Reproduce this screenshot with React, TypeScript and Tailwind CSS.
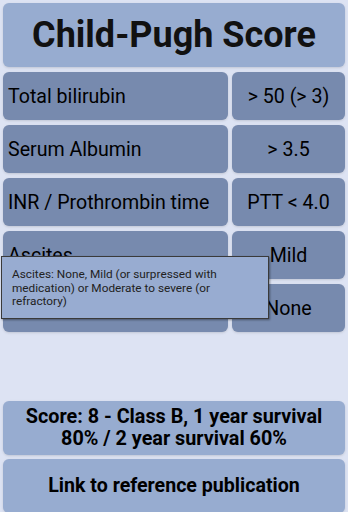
import React from "react";

const rows = [
  { label: "Total bilirubin", value: "> 50 (> 3)" },
  { label: "Serum Albumin", value: "> 3.5" },
  { label: "INR / Prothrombin time", value: "PTT < 4.0" },
  { label: "Ascites", value: "Mild" },
  { label: "Hepatic encephalopathy", value: "None" },
];

export default function App() {
  return (
    <div
      className="relative h-[512px] w-[348px] overflow-hidden bg-[#dde3f3] px-[3px] pt-[3px] text-black"
      style={{ fontFamily: "Roboto, 'Noto Sans', sans-serif" }}
    >
      {/* title */}
      <div className="flex h-[64px] items-center justify-center rounded-[6px] bg-[#97acd0] shadow-sm">
        <h1 className="text-[36px] font-bold leading-none text-[#111]">Child-Pugh Score</h1>
      </div>

      {/* parameter rows */}
      <div className="mt-[5px] flex flex-col gap-[5px]">
        {rows.map((row) => (
          <div key={row.label} className="flex h-[48px] gap-[4px]">
            <div className="flex w-[225px] items-center whitespace-nowrap rounded-[6px] bg-[#778aae] pl-[5px] pt-[2px] text-[19.6px] shadow-sm">
              {row.label}
            </div>
            <div className="flex flex-1 items-center justify-center rounded-[6px] bg-[#778aae] pt-[2px] text-[19.6px] shadow-sm">
              {row.value}
            </div>
          </div>
        ))}
      </div>

      {/* result */}
      <div className="mt-[69px] flex h-[54px] items-center justify-center rounded-[6px] bg-[#97acd0] text-center text-[19.8px] font-bold leading-[22px] shadow-sm">
        Score: 8 - Class B, 1 year survival
        <br />
        80% / 2 year survival 60%
      </div>
      <div className="mt-[4px] flex h-[54px] items-center justify-center rounded-[6px] bg-[#97acd0] text-[19.6px] font-bold shadow-sm">
        Link to reference publication
      </div>

      {/* tooltip over the Ascites row */}
      <div className="absolute left-[1px] top-[256px] h-[63px] w-[268px] border border-[#3a3a3a] bg-[#98acd1] px-[10px] pt-[11px] text-[11.8px] leading-[13.6px] text-[#222] shadow-[1px_1px_2px_rgba(0,0,0,0.4)]">
        <p className="w-[228px]">
          Ascites: None, Mild (or surpressed with medication) or Moderate to severe (or refractory)
        </p>
      </div>
    </div>
  );
}
